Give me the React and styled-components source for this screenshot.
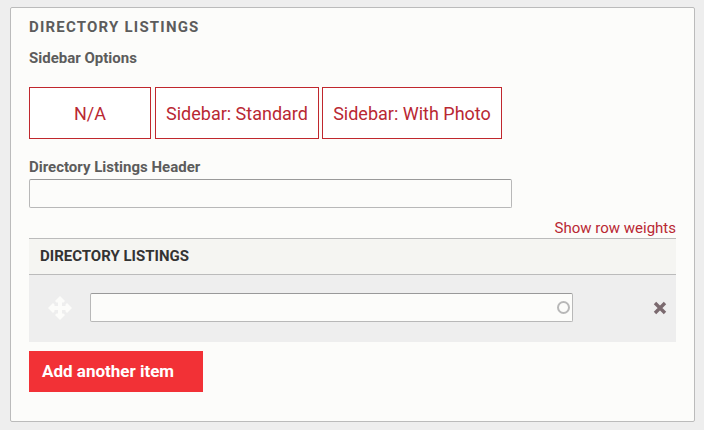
import React from 'react'
import styled, {createGlobalStyle} from 'styled-components'

const GlobalStyle = createGlobalStyle`
  html, body {
    margin: 0;
    background: #eeeeee;
    font-family: Roboto, "Liberation Sans", sans-serif;
  }
`

const options = [
  {label: 'N/A', width: 122},
  {label: 'Sidebar: Standard', width: 164},
  {label: 'Sidebar: With Photo', width: 180},
]

export default function App() {
  return (
    <>
      <GlobalStyle />
      <Panel>
        <Title>Directory Listings</Title>
        <Label>Sidebar Options</Label>
        <Options>
          {options.map(option => (
            <Option key={option.label} $width={option.width}>
              {option.label}
            </Option>
          ))}
        </Options>
        <HeaderLabel>Directory Listings Header</HeaderLabel>
        <HeaderInput type="text" />
        <WeightsRow>
          <WeightsLink>Show row weights</WeightsLink>
        </WeightsRow>
        <TableHead>Directory Listings</TableHead>
        <Row>
          <DragHandle viewBox="0 0 24 24" aria-hidden="true">
            <path d="M12 0l5 5-1.500 1.500H14V10h3.500V8.500L19 7l5 5-5 5-1.500-1.500V14H14v3.500h1.500L17 19l-5 5-5-5 1.500-1.500H10V14H6.500v1.500L5 17l-5-5 5-5 1.500 1.500V10H10V6.500H8.500L7 5z" />
          </DragHandle>
          <AutocompleteField>
            <RowInput type="text" />
            <Throbber />
          </AutocompleteField>
          <Remove viewBox="0 0 14 14" aria-hidden="true">
            <path d="M2 2l10 10M12 2L2 12" />
          </Remove>
        </Row>
        <AddButton>Add another item</AddButton>
      </Panel>
    </>
  )
}

const Panel = styled.div`
  box-sizing: border-box;
  width: 685px;
  height: 415px;
  margin: 7px 0 0 10px;
  padding: 10px 18px 0;
  border: 1px solid #bbbbbb;
  border-radius: 2px;
  background: #fcfcfa;
`

const Title = styled.h2`
  margin: 0;
  font-size: 15px;
  line-height: 18px;
  font-weight: 700;
  letter-spacing: 1.2px;
  text-transform: uppercase;
  color: #5c5c5c;
`

const Label = styled.div`
  margin-top: 13px;
  font-size: 15px;
  line-height: 18px;
  font-weight: 700;
  color: #5c5c5c;
`

const Options = styled.div`
  display: flex;
  gap: 4px;
  margin-top: 20px;
`

const Option = styled.button`
  box-sizing: border-box;
  width: ${props => props.$width}px;
  height: 52px;
  margin-right: ${props => (props.$width === 164 ? '-1px' : '0')};
  padding: 0;
  border: 1px solid #c0272d;
  border-radius: 0;
  background: #ffffff;
  color: #b92833;
  font-family: inherit;
  font-size: 18px;
  white-space: nowrap;
`

const HeaderLabel = styled(Label)`
  margin-top: 19px;
`

const HeaderInput = styled.input`
  display: block;
  box-sizing: border-box;
  width: 483px;
  height: 29px;
  margin-top: 3px;
  border: 1px solid #b8b8b8;
  border-top-color: #999999;
  border-radius: 2px;
  background: #fcfcfa;
`

const WeightsRow = styled.div`
  display: flex;
  justify-content: flex-end;
  height: 30px;
  align-items: flex-end;
`

const WeightsLink = styled.a`
  margin-bottom: 1px;
  font-size: 15px;
  line-height: 18px;
  color: #b92833;
`

const TableHead = styled.div`
  box-sizing: border-box;
  height: 37px;
  padding-left: 11px;
  border-top: 1px solid #bbbbbb;
  border-bottom: 1px solid #bbbbbb;
  background: #f5f5f2;
  font-size: 15px;
  line-height: 35px;
  font-weight: 700;
  text-transform: uppercase;
  color: #333333;
`

const Row = styled.div`
  box-sizing: border-box;
  display: flex;
  align-items: center;
  height: 67px;
  padding-bottom: 2px;
  background: #eeeeee;
`

const DragHandle = styled.svg`
  width: 24px;
  height: 24px;
  margin-left: 19px;
  fill: #fcfcfa;
`

const AutocompleteField = styled.div`
  position: relative;
  margin-left: 18px;
`

const RowInput = styled.input`
  display: block;
  box-sizing: border-box;
  width: 483px;
  height: 29px;
  border: 1px solid #b8b8b8;
  border-top-color: #999999;
  border-radius: 2px;
  background: #fcfcfa;
`

const Throbber = styled.span`
  position: absolute;
  top: 8px;
  right: 3px;
  box-sizing: border-box;
  width: 13px;
  height: 13px;
  border: 2px solid #b8b8b8;
  border-radius: 50%;
`

const Remove = styled.svg`
  width: 14px;
  height: 14px;
  margin-left: 80px;
  fill: none;
  stroke: #7b6a6f;
  stroke-width: 3.4;
`

const AddButton = styled.button`
  display: block;
  box-sizing: border-box;
  width: 174px;
  height: 41px;
  margin-top: 9px;
  padding: 0 0 2px 13px;
  border: 0;
  background: #f23136;
  color: #ffffff;
  font-family: inherit;
  font-size: 17px;
  font-weight: 700;
  text-align: left;
`
